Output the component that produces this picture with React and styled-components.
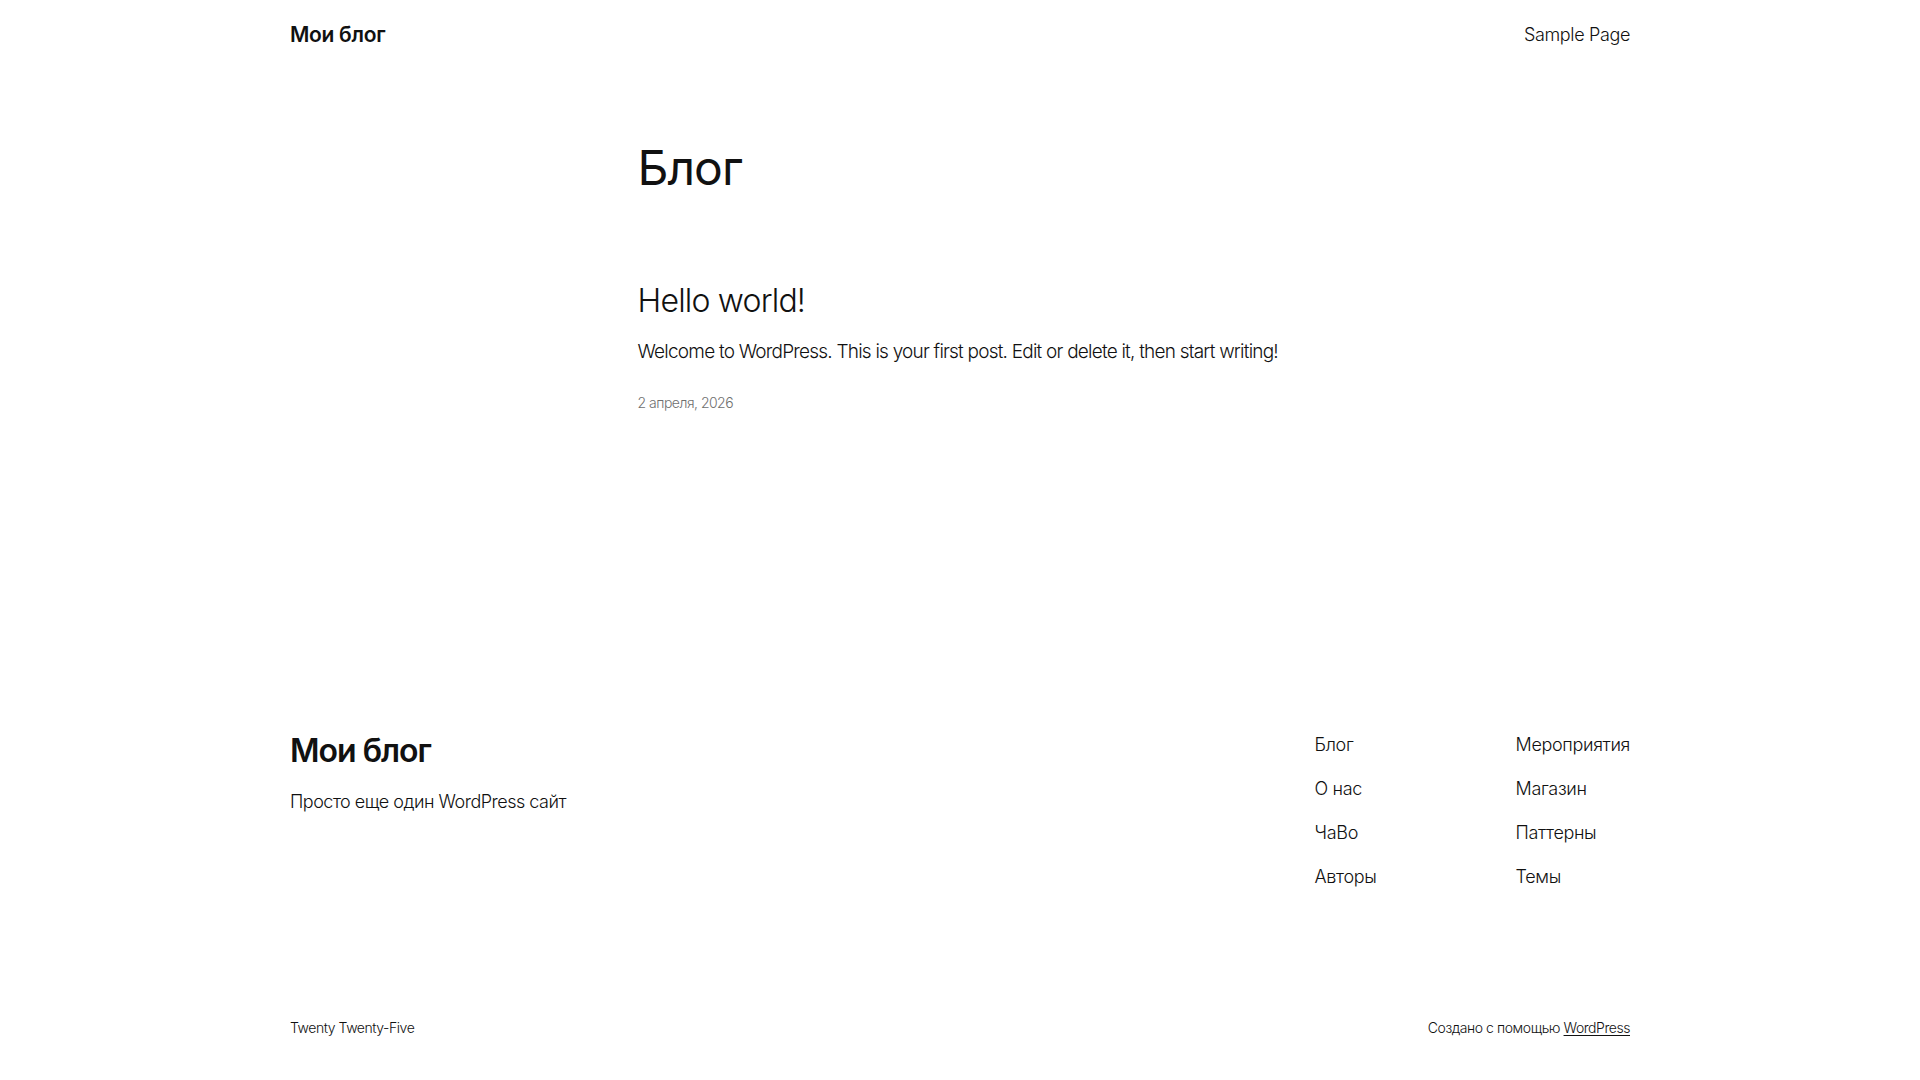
import styled, { createGlobalStyle } from "styled-components";

const GlobalStyle = createGlobalStyle`
  html, body {
    margin: 0;
    padding: 0;
    background: #ffffff;
  }
  body {
    font-family: Inter, "Noto Sans", "Liberation Sans", sans-serif;
    font-weight: 300;
    color: #111111;
    -webkit-font-smoothing: antialiased;
  }
  a {
    color: inherit;
    text-decoration: none;
  }
`

const Page = styled.div`
  min-height: 1080px;
  display: flex;
  flex-direction: column;
`

const Header = styled.header`
  width: 1340px;
  height: 69px;
  margin: 0 auto;
  display: flex;
  align-items: center;
  justify-content: space-between;
`

const SiteTitle = styled.a`
  font-size: ${props => props.size}px;
  font-weight: 600;
  letter-spacing: ${props => props.tracking}px;
  line-height: 1.2;
  color: #111111;
`

const NavLink = styled.a`
  font-size: 18px;
  font-weight: 300;
  line-height: 1.4;
  letter-spacing: -0.35px;
`

const Main = styled.main`
  width: 645px;
  margin: 70px auto 0;
`

const PageTitle = styled.h1`
  margin: 0;
  font-size: 48px;
  font-weight: 400;
  line-height: 1.2;
  letter-spacing: -1px;
`

const Post = styled.article`
  margin-top: 85px;
`

const PostTitle = styled.h2`
  margin: 0;
  font-size: 32px;
  font-weight: 300;
  line-height: 1.2;
  letter-spacing: -0.8px;
`

const Excerpt = styled.p`
  margin: 18px 0 0;
  font-size: 19px;
  line-height: 1.47;
  letter-spacing: -0.78px;
  white-space: nowrap;
`

const PostDate = styled.time`
  display: block;
  margin-top: 27px;
  font-size: 14px;
  line-height: 1.4;
  color: #6f6f6f;
  letter-spacing: -0.5px;
`

const Footer = styled.footer`
  width: 1340px;
  margin: 319px auto 0;
  padding-bottom: 41px;
`

const FooterTop = styled.div`
  display: flex;
  justify-content: space-between;
  align-items: flex-start;
`

const Brand = styled.div`
  display: flex;
  flex-direction: column;
  gap: 19px;
`

const Tagline = styled.p`
  margin: 0;
  font-size: 18px;
  line-height: 1.4;
  letter-spacing: -0.5px;
`

const FooterNav = styled.nav`
  display: grid;
  grid-template-columns: 201px auto;
`

const NavColumn = styled.div`
  display: flex;
  flex-direction: column;
  gap: 19px;
`

const FooterBottom = styled.div`
  margin-top: 129px;
  display: flex;
  justify-content: space-between;
  font-size: 14px;
  line-height: 1.4;
  letter-spacing: -0.45px;
`

const Credit = styled.span`
  a {
    text-decoration: underline;
    text-underline-offset: 2px;
  }
`

const leftLinks = ["Блог", "О нас", "ЧаВо", "Авторы"]
const rightLinks = ["Мероприятия", "Магазин", "Паттерны", "Темы"]

function App () {
  return (
    <Page>
      <GlobalStyle />
      <Header>
        <SiteTitle href="#" size={21} tracking={-0.3}>Мои блог</SiteTitle>
        <NavLink href="#">Sample Page</NavLink>
      </Header>

      <Main>
        <PageTitle>Блог</PageTitle>
        <Post>
          <PostTitle>Hello world!</PostTitle>
          <Excerpt>
            Welcome to WordPress. This is your first post. Edit or delete it, then start writing!
          </Excerpt>
          <PostDate>2 апреля, 2026</PostDate>
        </Post>
      </Main>

      <Footer>
        <FooterTop>
          <Brand>
            <SiteTitle href="#" size={32} tracking={-1}>Мои блог</SiteTitle>
            <Tagline>Просто еще один WordPress сайт</Tagline>
          </Brand>
          <FooterNav>
            <NavColumn>
              {leftLinks.map(item => <NavLink key={item} href="#">{item}</NavLink>)}
            </NavColumn>
            <NavColumn>
              {rightLinks.map(item => <NavLink key={item} href="#">{item}</NavLink>)}
            </NavColumn>
          </FooterNav>
        </FooterTop>
        <FooterBottom>
          <span>Twenty Twenty-Five</span>
          <Credit>Создано с помощью <a href="#">WordPress</a></Credit>
        </FooterBottom>
      </Footer>
    </Page>
  )
}

export default App
